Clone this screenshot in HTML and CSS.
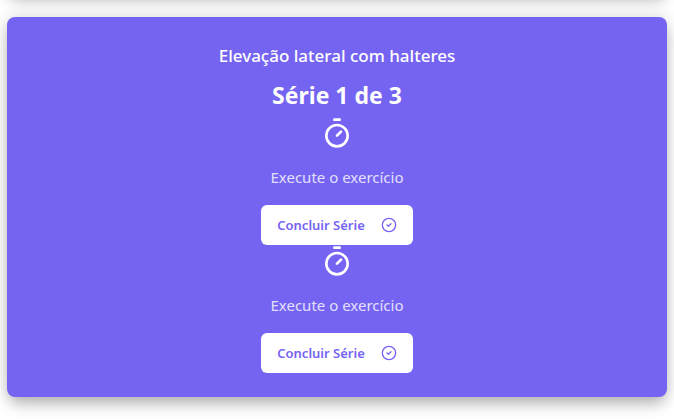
FILE: index.html
```html
<!DOCTYPE html>
<html lang="pt-BR">
<head>
<meta charset="utf-8">
<title>Treino</title>
<link rel="stylesheet" href="styles.css">
</head>
<body>
<main class="workout">
  <div class="previous"></div>
  <section class="card">
    <h2 class="exercise">Elevação lateral com halteres</h2>
    <p class="series">Série 1 de 3</p>
    <div class="step">
      <svg class="timer" viewBox="0 0 24 24" aria-hidden="true"><path d="M10 2h4M12 14l3-3"/><circle cx="12" cy="14" r="8"/></svg>
      <p class="hint">Execute o exercício</p>
      <button class="finish" type="button">Concluir Série
        <svg class="check" viewBox="0 0 24 24" aria-hidden="true"><circle cx="12" cy="12" r="10"/><path d="m9 12 2 2 4-4"/></svg>
      </button>
    </div>
    <div class="step">
      <svg class="timer" viewBox="0 0 24 24" aria-hidden="true"><path d="M10 2h4M12 14l3-3"/><circle cx="12" cy="14" r="8"/></svg>
      <p class="hint">Execute o exercício</p>
      <button class="finish" type="button">Concluir Série
        <svg class="check" viewBox="0 0 24 24" aria-hidden="true"><circle cx="12" cy="12" r="10"/><path d="m9 12 2 2 4-4"/></svg>
      </button>
    </div>
  </section>
</main>
</body>
</html>
```
FILE: styles.css
```css
* {
  box-sizing: border-box;
  margin: 0;
}

body {
  background: #fff;
  color: #fff;
  font-family: "Noto Sans", "Open Sans", sans-serif;
}

.workout {
  display: flex;
  flex-direction: column;
  gap: 24px;
  min-height: 100vh;
  padding: 0 7px 22px;
}

.previous {
  height: 40px;
  margin-top: -47px;
  border-radius: 8px;
  box-shadow: 0 0 16px rgba(0, 0, 0, 0.16), 0 10px 15px -3px rgba(0, 0, 0, 0.24);
}

.card {
  display: flex;
  flex-direction: column;
  align-items: center;
  padding: 24px;
  border-radius: 8px;
  background: #7564f1;
  box-shadow: 0 0 16px rgba(0, 0, 0, 0.16), 0 10px 15px -3px rgba(0, 0, 0, 0.24);
}

.exercise {
  margin-bottom: 8px;
  font-size: 17px;
  font-weight: 500;
  line-height: 30px;
}

.series {
  margin-bottom: 6px;
  font-size: 23px;
  font-weight: 700;
  line-height: 32px;
}

.step {
  display: flex;
  flex-direction: column;
  align-items: center;
}

.timer {
  width: 32px;
  height: 32px;
  margin-bottom: 16px;
}

.timer,
.check {
  fill: none;
  stroke: currentColor;
  stroke-width: 2;
  stroke-linecap: round;
  stroke-linejoin: round;
}

.hint {
  margin-bottom: 16px;
  font-size: 15px;
  line-height: 24px;
  opacity: 0.8;
}

.finish {
  display: inline-flex;
  align-items: center;
  gap: 16px;
  height: 40px;
  padding: 0 16px;
  border: 0;
  border-radius: 6px;
  background: #fff;
  color: #7564f1;
  font-family: inherit;
  font-size: 13px;
  font-weight: 600;
  line-height: 20px;
}

.check {
  width: 16px;
  height: 16px;
}
```
